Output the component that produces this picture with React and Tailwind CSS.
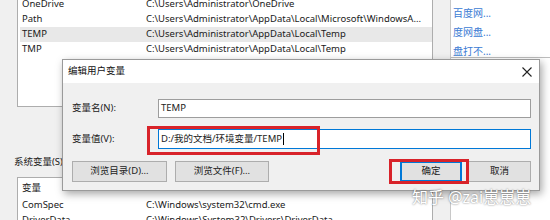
import React from 'react'

const UI = { fontFamily: '"Noto Sans", "Noto Sans CJK SC", sans-serif' }

const USER_VARS = [
  ['OneDrive', 'C:\\Users\\Administrator\\OneDrive'],
  ['Path', 'C:\\Users\\Administrator\\AppData\\Local\\Microsoft\\WindowsA...'],
  ['TEMP', 'C:\\Users\\Administrator\\AppData\\Local\\Temp', true],
  ['TMP', 'C:\\Users\\Administrator\\AppData\\Local\\Temp'],
]

const SYS_VARS = [
  ['ComSpec', 'C:\\Windows\\system32\\cmd.exe'],
  ['DriverData', 'C:\\Windows\\System32\\Drivers\\DriverData'],
]

function Row({ name, value, selected }) {
  return (
    <div className={`flex h-[15px] items-center ${selected ? 'bg-[#e8e8e8]' : ''}`}>
      <span className="w-[126px] shrink-0 pl-[2px]">{name}</span>
      <span className="whitespace-nowrap">{value}</span>
    </div>
  )
}

function Button({ children, primary }) {
  return (
    <div
      className={`flex h-[21px] items-center justify-center bg-[#e1e1e1] text-[9.5px] text-[#222] ${
        primary ? 'border-2 border-[#0078d7]' : 'border border-[#adadad]'
      }`}
    >
      {children}
    </div>
  )
}

function Dialog() {
  return (
    <div className="absolute left-[62px] top-[59px] flex h-[132px] w-[478px] flex-col border border-[#9a9a9a] bg-[#f0f0f0] shadow-[2px_3px_8px_rgba(0,0,0,0.35)]">
      <div className="flex h-[23px] shrink-0 items-center justify-between bg-white pl-[5px] pr-[7px] text-[9.5px] text-[#111]">
        <span>编辑用户变量</span>
        <svg width="10" height="10" viewBox="0 0 10 10" stroke="#222" strokeWidth="1.1">
          <path d="M0.5 0.5 L9.5 9.5 M9.5 0.5 L0.5 9.5" />
        </svg>
      </div>
      <div className="flex flex-col pl-[9px] pr-[8px] pt-[16px] text-[9.5px] text-[#222]">
        <div className="flex h-[19px] items-center">
          <span className="w-[86px] shrink-0">变量名(N):</span>
          <div className="flex h-full flex-1 items-center border border-[#9d9d9d] bg-white pl-[2px]">TEMP</div>
        </div>
        <div className="mt-[11px] flex h-[20px] items-center">
          <span className="w-[86px] shrink-0">变量值(V):</span>
          <div className="flex h-full flex-1 items-center border border-[#0078d7] bg-white pl-[2px]">
            D:/我的文档/环境变量/TEMP<span className="ml-px h-[12px] w-px bg-black" />
          </div>
        </div>
        <div className="mt-[12px] flex">
          <div className="w-[95px]"><Button>浏览目录(D)...</Button></div>
          <div className="ml-[8px] w-[94px]"><Button>浏览文件(F)...</Button></div>
          <div className="ml-auto w-[62px]"><Button primary>确定</Button></div>
          <div className="ml-[6px] w-[63px]"><Button>取消</Button></div>
        </div>
      </div>
    </div>
  )
}

export default function App() {
  return (
    <div className="relative h-[220px] w-[550px] overflow-hidden bg-[#f0f0f0] text-[9.5px] text-[#1a1a1a]" style={UI}>
      <div className="flex h-full">
        <div className="flex w-[450px] shrink-0 flex-col">
          <div className="ml-[17px] mt-[-8px] h-[115px] w-[416px] shrink-0 overflow-hidden border border-[#adadad] bg-white pl-[2px] pt-[4px]">
            {USER_VARS.map(([n, v, s]) => (
              <Row key={n} name={n} value={v} selected={s} />
            ))}
          </div>
          <div className="ml-[14px] mt-[49px] h-[12px] shrink-0 leading-[12px]">系统变量(S)</div>
          <div className="ml-[17px] mt-[9px] h-[60px] w-[416px] shrink-0 overflow-hidden border border-[#adadad] bg-white pl-[2px] pt-[3px]">
            <div className="flex h-[15px] items-center pl-[2px]">变量</div>
            <div className="h-[2px]" />
            {SYS_VARS.map(([n, v]) => (
              <Row key={n} name={n} value={v} />
            ))}
          </div>
        </div>
        <div className="flex-1 border-l border-[#c8c8c8] bg-white">
          <div className="flex h-[58px] flex-col gap-[5px] border-b border-[#bdbdbd] pl-[2px] pt-[6px] text-[10px] leading-[14px] text-[#3b7bd4]">
            <span>百度网...</span>
            <span>度网盘...</span>
            <span>盘打不...</span>
          </div>
        </div>
      </div>

      <Dialog />

      <div className="absolute left-[147px] top-[126px] h-[29px] w-[173px] border-[3px] border-[#d8232a]" />
      <div className="absolute left-[389px] top-[159px] h-[25px] w-[80px] border-[3px] border-[#d8232a]" />

      <div className="absolute left-[412px] top-[187px] text-[16px] leading-[20px] text-white [text-shadow:0_0_2px_rgba(0,0,0,0.6)]">
        知乎 @zai崽崽崽
      </div>
    </div>
  )
}
